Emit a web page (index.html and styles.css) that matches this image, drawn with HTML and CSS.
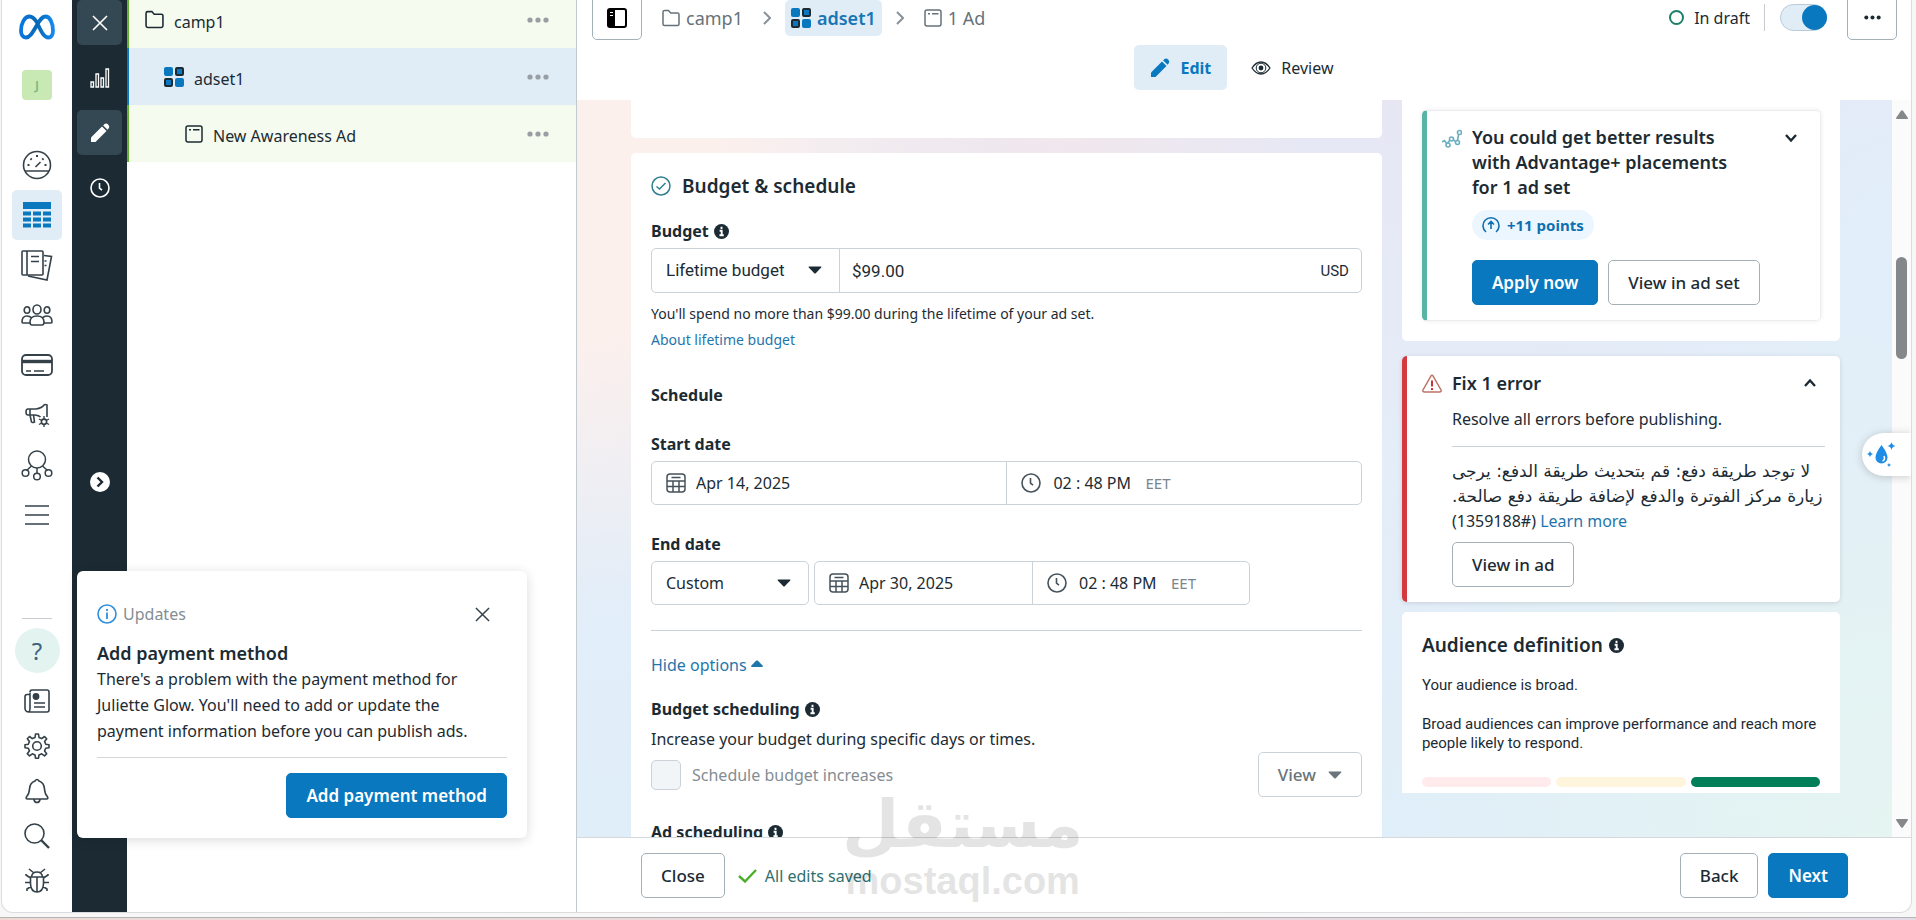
FILE: index.html
```html
<!DOCTYPE html>
<html lang="en">
<head>
    <meta charset="UTF-8">
    <meta name="viewport" content="width=device-width, initial-scale=1.0">
    <title>Ads Manager - adset1</title>
    <link rel="stylesheet" href="styles.css">
</head>
<body>

    <!-- Shared icons -->
    <svg class="sprite" aria-hidden="true">
        <symbol id="i-info" viewBox="0 0 16 16">
            <circle cx="8" cy="8" r="8" fill="#1c2b33"/>
            <path d="M8 3v2.400M6 7.200h2.200v4.600M5.800 12h4.600" fill="none" stroke="#fff" stroke-width="2"/>
        </symbol>
        <symbol id="i-folder" viewBox="0 0 18 18">
            <path d="M1 3q0-1.500 1.500-1.500h4l2.200 2.500h6.800q1.500 0 1.500 1.500v9.500q0 1.500-1.500 1.500h-13q-1.500 0-1.500-1.500z" fill="none" stroke="currentColor" stroke-width="1.500"/>
        </symbol>
        <symbol id="i-adset" viewBox="0 0 20 20">
            <rect x="0" y="0" width="9" height="9" rx="2" fill="#0a78be"/>
            <rect x="11" y="11" width="9" height="9" rx="2" fill="#0a78be"/>
            <rect x="12" y="1" width="7" height="7" rx="1" fill="#0a78be" stroke="#1c2b33" stroke-width="2"/>
            <rect x="1" y="12" width="7" height="7" rx="1" fill="#0a78be" stroke="#1c2b33" stroke-width="2"/>
        </symbol>
        <symbol id="i-ad" viewBox="0 0 18 18">
            <rect x="1" y="1" width="16" height="16" rx="2" fill="none" stroke="currentColor" stroke-width="1.500"/>
            <path d="M4 4.700h2M8 4.700h6.500" stroke="currentColor" stroke-width="1.500"/>
        </symbol>
        <symbol id="i-dots" viewBox="0 0 22 6">
            <circle cx="3" cy="3" r="2.600" fill="currentColor"/>
            <circle cx="11" cy="3" r="2.600" fill="currentColor"/>
            <circle cx="19" cy="3" r="2.600" fill="currentColor"/>
        </symbol>
        <symbol id="i-pencil" viewBox="0 0 20 20">
            <path d="M1 19v-4.500L12 3.500 16.500 8 5.500 19z" fill="currentColor"/>
            <path d="M13.200 2.400 14.500 1.100q1.800-1.500 3.600.300t.800 3.500L17.600 6.800z" fill="currentColor"/>
        </symbol>
        <symbol id="i-clock" viewBox="0 0 20 20">
            <circle cx="10" cy="10" r="9" fill="none" stroke="currentColor" stroke-width="1.600"/>
            <path d="M9.500 5v5.200l2.500 2" fill="none" stroke="currentColor" stroke-width="1.600"/>
        </symbol>
        <symbol id="i-calendar" viewBox="0 0 20 20">
            <rect x="1" y="1" width="18" height="18" rx="3" fill="none" stroke="currentColor" stroke-width="1.500"/>
            <path d="M1 8h18M1 13.500h18M7 8v11M13 8v11M5.500 4.500h9" stroke="currentColor" stroke-width="1.500"/>
        </symbol>
        <symbol id="i-cross" viewBox="0 0 16 16">
            <path d="M1 1l14 14M15 1L1 15" fill="none" stroke="currentColor" stroke-width="1.600"/>
        </symbol>
        <symbol id="i-chevron" viewBox="0 0 14 14">
            <path d="M2 4l5 5.500L12 4" fill="none" stroke="currentColor" stroke-width="2.400"/>
        </symbol>
        <symbol id="i-caret" viewBox="0 0 14 8">
            <path d="M1 .500h12q.800.300.200 1L8 7q-1 1-2 0L.800 1.500Q.200.800 1 .500z" fill="currentColor"/>
        </symbol>
    </svg>

    <div class="app">

        <!-- Global navigation -->
        <nav class="rail" aria-label="Tools">
            <a href="#" class="logo" aria-label="Meta">
                <svg width="36" height="26" viewBox="0 0 36 26" fill="none">
                    <defs>
                        <linearGradient id="metaBlue" x1="0" x2="1" y1="0" y2="0">
                            <stop offset="0" stop-color="#0a78e0"/>
                            <stop offset=".5" stop-color="#0668b4"/>
                            <stop offset="1" stop-color="#1489f0"/>
                        </linearGradient>
                    </defs>
                    <path d="M18 8.500C15.500 4.500 13.500 2.500 10.500 2.500 5.500 2.500 2 9.500 2 16.500 2 21 3.800 23.500 7 23.500c3.500 0 5.500-3 11-12.500 3-5.500 5-8.500 8.500-8.500C31 2.500 34 9.500 34 16.500c0 4.500-1.600 7-4.600 7-4 0-6.400-4-11.400-15z" stroke="url(#metaBlue)" stroke-width="3.800"/>
                </svg>
            </a>
            <a href="#" class="avatar">J</a>

            <div class="rail-main">
                <a href="#" aria-label="Account overview">
                    <svg width="30" height="30" viewBox="0 0 30 30" fill="none" stroke="currentColor" stroke-width="1.600">
                        <circle cx="15" cy="15" r="13.500"/>
                        <path d="M3 21h24M13.500 17l5-5"/>
                        <path d="M5.500 15h2M22.500 15h2M15 5v2M8.500 8.500l1.200 1.200M21.500 8.500l-1.200 1.200" stroke-width="2"/>
                    </svg>
                </a>
                <a href="#" class="active" aria-label="Campaigns">
                    <svg width="28" height="26" viewBox="0 0 28 26" fill="#0a78be">
                        <path d="M0 0h28v7H0zM0 9.500h8v4H0zM10 9.500h8v4h-8zM20 9.500h8v4h-8zM0 15.500h8v4H0zM10 15.500h8v4h-8zM20 15.500h8v4h-8zM0 21.500h8v4H0zM10 21.500h8v4h-8zM20 21.500h8v4h-8z"/>
                    </svg>
                </a>
                <a href="#" aria-label="Ads reporting">
                    <svg width="32" height="31" viewBox="0 0 32 31" fill="none" stroke="currentColor" stroke-width="1.600">
                        <path d="M23 5.500l7.500 1-4.500 23.500-19-4M23.500 11h2M23.500 15.500h2"/>
                        <rect x="1" y="1" width="21" height="24" rx="1" fill="#fff"/>
                        <path d="M6 1v24M10 6.500h8M10 11.500h8"/>
                    </svg>
                </a>
                <a href="#" aria-label="Audiences">
                    <svg width="32" height="22" viewBox="0 0 32 22" fill="none" stroke="currentColor" stroke-width="1.600">
                        <ellipse cx="16" cy="5.500" rx="4" ry="4.500"/>
                        <ellipse cx="6" cy="6" rx="2.800" ry="3.300"/>
                        <ellipse cx="26" cy="6" rx="2.800" ry="3.300"/>
                        <path d="M9 18q0-6 7-6t7 6q0 3-2 3H11q-2 0-2-3zM9 19H2q-1 0-1-1 0-6 5-6 3 0 4.500 2M23 19h7q1 0 1-1 0-6-5-6-3 0-4.500 2"/>
                    </svg>
                </a>
                <a href="#" aria-label="Billing and payments">
                    <svg width="32" height="22" viewBox="0 0 32 22" fill="none" stroke="currentColor" stroke-width="1.800">
                        <rect x="1" y="1" width="30" height="20" rx="4"/>
                        <path d="M1 7.500h30" stroke-width="3.400"/>
                        <path d="M5 17h5M13 17h10" stroke-width="1.500"/>
                    </svg>
                </a>
                <a href="#" aria-label="Ad settings">
                    <svg width="25" height="25" viewBox="0 0 25 25" fill="none" stroke="currentColor" stroke-width="1.600">
                        <path d="M3 6h8q6-1 8-4 1-1 3 0v12M5 6v6M3 6Q1 6 1 9t2 3h7q4 .500 5.500 2M5 12l1.500 7q1 1 3 0l-1-7"/>
                        <path d="M19 13v11M14 16l10 5.500M24 16l-10 5.500" stroke-width="1.400"/>
                        <circle cx="19" cy="18.700" r="2.600" fill="#fff"/>
                    </svg>
                </a>
                <a href="#" aria-label="Events manager">
                    <svg width="32" height="31" viewBox="0 0 32 31" fill="none" stroke="currentColor" stroke-width="1.500">
                        <circle cx="16" cy="9.500" r="8.500"/>
                        <path d="M16 18v5M10.500 16l-5 4.500M21.500 16l5 4.500"/>
                        <circle cx="4.500" cy="23" r="3.300"/>
                        <circle cx="16" cy="26.500" r="3.300"/>
                        <circle cx="27.500" cy="23" r="3.300"/>
                    </svg>
                </a>
                <a href="#" aria-label="All tools">
                    <svg width="24" height="22" viewBox="0 0 24 22" fill="none" stroke="currentColor" stroke-width="1.500">
                        <path d="M0 2h24M0 11h24M0 20h24"/>
                    </svg>
                </a>
            </div>

            <div class="rail-bottom">
                <a href="#" class="help">?</a>
                <a href="#" aria-label="News">
                    <svg width="26" height="24" viewBox="0 0 26 24" fill="none" stroke="currentColor" stroke-width="1.600">
                        <path d="M6 3.500Q6 1 8 1h15q2 0 2 2v18q0 2-2 2H5q-4 0-4-4V8q0-2.500 2-2.500h3M6 4v15q0 4-2 4M10 14h11M10 18h11"/>
                        <circle cx="12" cy="7.500" r="2.600" fill="currentColor"/>
                    </svg>
                </a>
                <a href="#" aria-label="Settings">
                    <svg width="26" height="26" viewBox="0 0 26 26" fill="none" stroke="currentColor" stroke-width="1.600">
                        <path d="M11 4.500 11.500 1h3L15 4.500l2.700 1.100L20.500 3.500l2.200 2.200-2.100 2.800 1.100 2.700 3.300.500v3l-3.300.500-1.100 2.700 2.100 2.800-2.200 2.200-2.800-2.100-2.700 1.100-.500 3.300h-3l-.500-3.300-2.700-1.100-2.800 2.100-2.200-2.200 2.100-2.800L4.300 15.200 1 14.700v-3l3.300-.500 1.100-2.700-2.100-2.800 2.200-2.200 2.800 2.100z" stroke-linejoin="round"/>
                        <circle cx="13" cy="13" r="4.300"/>
                    </svg>
                </a>
                <a href="#" aria-label="Notifications">
                    <svg width="24" height="26" viewBox="0 0 24 26" fill="none" stroke="currentColor" stroke-width="1.600">
                        <path d="M10 3q2-3 4 0 5 1.500 5.500 8 .300 5 2.800 7.500 1.500 2.500-1 2.500H2.700q-2.500 0-1-2.500Q4.200 16 4.500 11 5 4.500 10 3zM9 21.500q.500 3 3 3t3-3"/>
                    </svg>
                </a>
                <a href="#" aria-label="Search">
                    <svg width="26" height="26" viewBox="0 0 26 26" fill="none" stroke="currentColor" stroke-width="1.600">
                        <circle cx="10.500" cy="10.500" r="9.500"/>
                        <path d="M17 17l8 8" stroke-width="2.400"/>
                    </svg>
                </a>
                <a href="#" aria-label="Report a problem">
                    <svg width="24" height="25" viewBox="0 0 24 25" fill="none" stroke="currentColor" stroke-width="1.600">
                        <path d="M5.500 9h13v7q-.500 8-6.500 8t-6.500-8zM6.500 9Q7 4 12 4t5.500 5M12 9v15M4 1l5 4M20 1l-5 4M5.500 10 1 7v-1M18.500 10 23 7v-1M0 14.500h5.500M24 14.500h-5.500M6 18.500 2 21v2M18 18.500l4 2.500v2"/>
                    </svg>
                </a>
            </div>
        </nav>

        <!-- Editor tools -->
        <div class="tools">
            <button class="on" aria-label="Close editor"><svg width="16" height="16"><use href="#i-cross"/></svg></button>
            <button aria-label="Charts">
                <svg width="20" height="20" viewBox="0 0 20 20" fill="none" stroke="currentColor" stroke-width="1.300">
                    <path d="M1 14h2.500v5H1zM6 6h2.500v13H6zM11 10h2.500v9H11zM16 1h2.500v18H16z"/>
                </svg>
            </button>
            <button class="on" aria-label="Edit"><svg width="20" height="20"><use href="#i-pencil"/></svg></button>
            <button aria-label="History"><svg width="20" height="20"><use href="#i-clock"/></svg></button>
            <button class="expand" aria-label="Expand">
                <svg width="8" height="12" viewBox="0 0 8 12" fill="none" stroke="#1c2b33" stroke-width="2.400"><path d="M1.500 1.500 6 6l-4.500 4.500"/></svg>
            </button>
        </div>

        <!-- Campaign tree -->
        <aside class="tree">
            <ul>
                <li class="level-1">
                    <svg width="19" height="19"><use href="#i-folder"/></svg>
                    <a href="#">camp1</a>
                    <button aria-label="More options"><svg width="22" height="6"><use href="#i-dots"/></svg></button>
                </li>
                <li class="level-2 selected">
                    <svg width="20" height="20"><use href="#i-adset"/></svg>
                    <a href="#">adset1</a>
                    <button aria-label="More options"><svg width="22" height="6"><use href="#i-dots"/></svg></button>
                </li>
                <li class="level-3">
                    <svg width="18" height="18"><use href="#i-ad"/></svg>
                    <a href="#">New Awareness Ad</a>
                    <button aria-label="More options"><svg width="22" height="6"><use href="#i-dots"/></svg></button>
                </li>
            </ul>
        </aside>

        <main class="editor">
            <header class="topbar">
                <div class="crumb-row">
                    <button class="btn icon-btn" aria-label="Toggle side panel">
                        <svg width="20" height="20" viewBox="0 0 20 20">
                            <rect x="1" y="1" width="18" height="18" rx="2" fill="none" stroke="#000" stroke-width="2"/>
                            <path d="M1 1h7v18H1z"/>
                            <path d="M3 4.500h3M3 7.500h3" stroke="#fff" stroke-width="1.200"/>
                        </svg>
                    </button>
                    <nav class="crumbs" aria-label="Breadcrumb">
                        <a href="#"><svg width="18" height="18"><use href="#i-folder"/></svg>camp1</a>
                        <svg class="sep" width="8" height="14" viewBox="0 0 8 14"><path d="M1 1l6 6-6 6" fill="none" stroke="#8a9299" stroke-width="2"/></svg>
                        <a href="#" class="current"><svg width="20" height="20"><use href="#i-adset"/></svg>adset1</a>
                        <svg class="sep" width="8" height="14" viewBox="0 0 8 14"><path d="M1 1l6 6-6 6" fill="none" stroke="#8a9299" stroke-width="2"/></svg>
                        <a href="#"><svg width="18" height="18"><use href="#i-ad"/></svg>1 Ad</a>
                    </nav>
                    <div class="status">
                        <span class="ring"></span>
                        <span class="draft">In draft</span>
                        <input type="checkbox" class="switch" aria-label="Ad set on or off" checked>
                        <button class="btn icon-btn" aria-label="More">
                            <svg width="17" height="5"><use href="#i-dots"/></svg>
                        </button>
                    </div>
                </div>
                <div class="tabs">
                    <button class="tab active"><svg width="20" height="20"><use href="#i-pencil"/></svg>Edit</button>
                    <button class="tab">
                        <svg width="20" height="14" viewBox="0 0 20 14" fill="none" stroke="#1c2b33">
                            <path d="M1 7q4-6 9-6t9 6q-4 6-9 6T1 7z" stroke-width="1.300"/>
                            <circle cx="10" cy="7" r="4.800" stroke-width="1"/>
                            <circle cx="10" cy="7" r="2.400" fill="#1c2b33" stroke="none"/>
                        </svg>Review
                    </button>
                </div>
            </header>

            <div class="scroll">
                <div class="columns">
                    <div class="form-col">
                        <section class="card previous"></section>

                        <section class="card budget">
                            <h2>
                                <svg width="20" height="20" viewBox="0 0 20 20" fill="none" stroke="#2f7f91" stroke-width="1.500"><circle cx="10" cy="10" r="9"/><path d="M5.500 10.500l3 2.500L14.500 7"/></svg>
                                Budget &amp; schedule
                            </h2>

                            <label class="label" for="amount">Budget <svg width="15" height="15"><use href="#i-info"/></svg></label>
                            <div class="field roboto">
                                <div class="select budget-type">
                                    <select aria-label="Budget type"><option>Lifetime budget</option></select>
                                    <svg width="14" height="8"><use href="#i-caret"/></svg>
                                </div>
                                <div class="part grow">
                                    <input type="text" id="amount" value="$99.00">
                                    <span class="usd">USD</span>
                                </div>
                            </div>
                            <p class="hint">You'll spend no more than $99.00 during the lifetime of your ad set.</p>
                            <p class="hint"><a href="#">About lifetime budget</a></p>

                            <h3>Schedule</h3>

                            <label class="label" for="start">Start date</label>
                            <div class="field halves">
                                <div class="part">
                                    <svg width="20" height="20"><use href="#i-calendar"/></svg>
                                    <input type="text" id="start" value="Apr 14, 2025">
                                </div>
                                <div class="part">
                                    <svg width="20" height="20"><use href="#i-clock"/></svg>
                                    <input type="text" class="time" aria-label="Start time" value="02 : 48 PM">
                                    <span class="zone">EET</span>
                                </div>
                            </div>

                            <label class="label end" for="end">End date</label>
                            <div class="end-row">
                                <div class="field select">
                                    <select aria-label="End date type"><option>Custom</option></select>
                                    <svg width="14" height="8"><use href="#i-caret"/></svg>
                                </div>
                                <div class="field halves">
                                    <div class="part">
                                        <svg width="20" height="20"><use href="#i-calendar"/></svg>
                                        <input type="text" id="end" value="Apr 30, 2025">
                                    </div>
                                    <div class="part">
                                        <svg width="20" height="20"><use href="#i-clock"/></svg>
                                        <input type="text" class="time" aria-label="End time" value="02 : 48 PM">
                                        <span class="zone">EET</span>
                                    </div>
                                </div>
                            </div>

                            <hr>

                            <a href="#" class="hide-options">Hide options <svg width="12" height="7" viewBox="0 0 12 7"><path d="M0 6 5 .800q1-.800 2 0L12 6q0 1-1 1H1Q0 7 0 6z" fill="currentColor"/></svg></a>

                            <h3 class="option">Budget scheduling <svg width="15" height="15"><use href="#i-info"/></svg></h3>
                            <p>Increase your budget during specific days or times.</p>
                            <div class="option-row">
                                <input type="checkbox" id="increases" disabled>
                                <label for="increases">Schedule budget increases</label>
                                <button class="btn view">View <svg width="14" height="8"><use href="#i-caret"/></svg></button>
                            </div>

                            <h3 class="option next-option">Ad scheduling <svg width="15" height="15"><use href="#i-info"/></svg></h3>
                        </section>
                    </div>

                    <div class="side-col">
                        <section class="card tips">
                            <div class="tip">
                                <svg width="20" height="20" viewBox="0 0 20 20" fill="none" stroke="#6aaebf" stroke-width="1.600">
                                    <path d="M0 13l2.500-1.500 2.500 3.500L9.500 9l5.500 5 1.500-8"/>
                                    <circle cx="6" cy="16" r="2" fill="#fff"/><circle cx="9.500" cy="10" r="2" fill="#fff"/>
                                    <circle cx="15.500" cy="13.500" r="2" fill="#fff"/><circle cx="17.500" cy="3.500" r="2" fill="#fff"/>
                                </svg>
                                <div class="tip-body">
                                    <h3>You could get better results with Advantage+ placements for 1 ad set</h3>
                                    <span class="points">
                                        <svg width="18" height="18" viewBox="0 0 18 18" fill="none" stroke="currentColor" stroke-width="1.600"><path d="M4 16a8 8 0 1 1 10 0M9 13V6M6 8.500 9 5.500l3 3"/></svg>
                                        +11 points
                                    </span>
                                    <div class="actions">
                                        <button class="btn primary">Apply now</button>
                                        <button class="btn">View in ad set</button>
                                    </div>
                                </div>
                                <button class="fold" aria-label="Expand"><svg width="14" height="14"><use href="#i-chevron"/></svg></button>
                            </div>
                        </section>

                        <section class="card error">
                            <svg width="20" height="19" viewBox="0 0 20 19" fill="none" stroke="#bd7468">
                                <path d="M9 2q1-1.600 2 0l8 14q.500 2-1.500 2h-15Q.500 18 1 16z" stroke-width="1.500"/>
                                <path d="M10 6.500v6M10 14v2" stroke="#c8323a" stroke-width="2"/>
                            </svg>
                            <div class="error-body">
                                <h3>Fix 1 error</h3>
                                <p>Resolve all errors before publishing.</p>
                                <p class="detail"><span class="arabic" dir="rtl" lang="ar">لا توجد طريقة دفع: قم بتحديث طريقة الدفع: يرجى<br>زيارة مركز الفوترة والدفع لإضافة طريقة دفع صالحة.<br></span><span dir="rtl">&#x61C;(#1359188)</span> <a href="#">Learn more</a></p>
                                <button class="btn">View in ad</button>
                            </div>
                            <button class="fold up" aria-label="Collapse"><svg width="14" height="14"><use href="#i-chevron"/></svg></button>
                        </section>

                        <section class="card audience">
                            <h2>Audience definition <svg width="15" height="15"><use href="#i-info"/></svg></h2>
                            <p>Your audience is broad.</p>
                            <p>Broad audiences can improve performance and reach more people likely to respond.</p>
                            <div class="meter"><span class="low"></span><span class="mid"></span><span class="high"></span></div>
                        </section>
                    </div>
                </div>

                <div class="scrollbar">
                    <svg width="12" height="9" viewBox="0 0 12 9"><path d="M5 .800q1-1 2 0L12 8q0 1-1 1H1Q0 9 0 8z" fill="#85888b"/></svg>
                    <div class="thumb"></div>
                    <svg width="12" height="9" viewBox="0 0 12 9"><path d="M5 8.200q1 1 2 0L12 1q0-1-1-1H1Q0 0 0 1z" fill="#85888b"/></svg>
                </div>
            </div>

            <footer class="bottombar">
                <button class="btn">Close</button>
                <span class="saved">
                    <svg width="19" height="14" viewBox="0 0 19 14" fill="none" stroke="#4caf2a" stroke-width="2.400"><path d="M1 7l6 5.500L18 1"/></svg>
                    All edits saved
                </span>
                <button class="btn back">Back</button>
                <button class="btn primary">Next</button>
            </footer>
        </main>

        <!-- Payment notice -->
        <div class="notice" role="dialog" aria-labelledby="notice-title">
            <div class="notice-head">
                <svg width="20" height="20" viewBox="0 0 20 20" fill="none" stroke="#2f8fdc" stroke-width="1.600"><circle cx="10" cy="10" r="9"/><path d="M10 8.500V15M10 5v2" stroke-width="1.800"/></svg>
                <span>Updates</span>
                <button aria-label="Dismiss"><svg width="15" height="15"><use href="#i-cross"/></svg></button>
            </div>
            <h3 id="notice-title">Add payment method</h3>
            <p>There's a problem with the payment method for Juliette Glow. You'll need to add or update the payment information before you can publish ads.</p>
            <div class="notice-foot"><button class="btn primary">Add payment method</button></div>
        </div>

        <button class="assistant" aria-label="Assistant">
            <svg width="30" height="28" viewBox="0 0 30 28" fill="#1f8ce6">
                <path d="M14.500 4q6 8 6 12.500a6 6 0 0 1-12 0Q8.500 12 14.500 4z"/>
                <path d="M17 15q1.500 4-1.500 5" stroke="#fff" stroke-width="1.500" fill="none"/>
                <path d="M24.500 1q.600 3 4 4-3.400.700-4 4-.600-3.300-4-4 3.400-1 4-4zM3 10q.500 2.300 3 3-2.500.700-3 3-.500-2.300-3-3 2.500-.700 3-3zM22 22q.300 1.700 2 2-1.700.300-2 2-.300-1.700-2-2 1.700-.300 2-2z"/>
            </svg>
        </button>

        <div class="watermark">
            <span class="wm-ar" lang="ar" dir="rtl">مستقل</span>
            <span class="wm-en">mostaql.com</span>
        </div>
    </div>

</body>
</html>
```
FILE: styles.css
```css
/* General Styles */
* {
    box-sizing: border-box;
}

html, body {
    margin: 0;
    padding: 0;
}

body {
    height: 100vh;
    display: flex;
    padding: 0 4px 7px 1px;
    background: linear-gradient(to right, #eed9d4, #e3dbe6) bottom / 100% 2px no-repeat, linear-gradient(#b4b4b6, #b4b4b6) bottom / 100% 3px no-repeat, #f7f7f7;
    color: #1c2b33;
    font-family: "Noto Sans", "DejaVu Sans", sans-serif;
    font-size: 16px;
    line-height: 26px;
    overflow: hidden;
}

h2, h3, p, ul {
    margin: 0;
    padding: 0;
}

h2 {
    font-size: 19px;
    font-weight: 600;
}

h3 {
    font-size: 16px;
    font-weight: 700;
}

a {
    color: #1f76ab;
    text-decoration: none;
}

button, input, select {
    font: inherit;
    color: inherit;
    margin: 0;
    padding: 0;
    border: none;
    background: none;
}

button {
    cursor: pointer;
}

svg {
    flex: none;
}

.sprite {
    position: absolute;
    width: 0;
    height: 0;
}

.app {
    position: relative;
    flex: 1;
    display: flex;
    background: #fff;
    border: 1px solid #dcdcde;
    border-top: none;
    border-radius: 0 0 12px 12px;
    overflow: hidden;
}

/* Buttons */
.btn {
    height: 45px;
    padding: 0 19px;
    border: 1px solid #a4b0b8;
    border-radius: 5px;
    background: #fff;
    font-size: 17px;
    font-weight: 500;
    white-space: nowrap;
}

.btn.primary {
    background: #0a78be;
    border-color: #0a78be;
    color: #fff;
    font-weight: 600;
}

.icon-btn {
    width: 50px;
    padding: 0;
    display: flex;
    align-items: center;
    justify-content: center;
}

/* Global navigation */
.rail {
    width: 70px;
    display: flex;
    flex-direction: column;
    align-items: center;
    padding-bottom: 9px;
}

.rail a {
    display: flex;
    align-items: center;
    justify-content: center;
    color: #344149;
}

.rail .logo {
    height: 54px;
}

.rail .avatar {
    width: 30px;
    height: 30px;
    margin: 16px 0 40px;
    border-radius: 4px;
    background: #c8e9b4;
    color: #7dbb7c;
    font-size: 13px;
    font-weight: 600;
}

.rail-main a {
    width: 50px;
    height: 50px;
    border-radius: 5px;
}

.rail-main .active {
    background: #e0edf7;
}

.rail-bottom {
    margin-top: auto;
    padding-top: 10px;
    background: linear-gradient(#c8ccd0, #c8ccd0) top / 30px 1px no-repeat;
}

.rail-bottom a {
    width: 45px;
    height: 45px;
}

.rail-bottom .help {
    margin-bottom: 5px;
    border-radius: 50%;
    background: #e3f4f0;
    color: #3c6480;
    font-size: 24px;
}

/* Editor tools */
.tools {
    width: 55px;
    display: flex;
    flex-direction: column;
    align-items: center;
    gap: 10px;
    background: #1c2b33;
}

.tools button {
    width: 45px;
    height: 45px;
    display: flex;
    align-items: center;
    justify-content: center;
    border-radius: 5px;
    color: #fff;
}

.tools .on {
    background: #344854;
}

.tools .expand {
    width: 20px;
    height: 20px;
    margin-top: 252px;
    border-radius: 50%;
    background: #fff;
}

/* Campaign tree */
.tree {
    width: 450px;
    border-right: 1px solid #c3cacf;
}

.tree ul {
    list-style: none;
    margin-top: -9px;
}

.tree li {
    height: 57px;
    display: flex;
    align-items: center;
    gap: 10px;
    padding-right: 27px;
    border-left: 2px solid #62b22f;
    background: #f5fbee;
}

.tree a {
    flex: 1;
    color: inherit;
    padding-top: 4px;
}

.tree button {
    display: flex;
    color: #989ea3;
}

.tree .level-1 {
    padding-left: 16px;
}

.tree .level-2 {
    padding-left: 35px;
}

.tree .level-3 {
    padding-left: 56px;
}

.tree .selected {
    background: #e0edf7;
    border-left-color: #0a78be;
}

/* Top bar */
.editor {
    flex: 1;
    min-width: 0;
    display: flex;
    flex-direction: column;
}

.topbar {
    height: 100px;
    padding: 0 14px 0 15px;
}

.crumb-row {
    display: flex;
    align-items: center;
    margin-top: -5px;
}

.crumbs {
    flex: 1;
    display: flex;
    align-items: center;
    gap: 14px;
    margin-left: 14px;
    font-size: 18px;
}

.crumbs a {
    height: 36px;
    display: flex;
    align-items: center;
    gap: 6px;
    padding: 0 6px;
    border-radius: 5px;
    color: #66727a;
}

.crumbs .current {
    background: #e0edf7;
    color: #1876b5;
    font-weight: 600;
}

.status {
    display: flex;
    align-items: center;
}

.ring {
    width: 15px;
    height: 15px;
    border: 2px solid #1c7f68;
    border-radius: 50%;
}

.draft {
    margin: 0 14px 0 10px;
}

.switch {
    appearance: none;
    position: relative;
    width: 47px;
    height: 27px;
    margin: 0 20px 0 16px;
    border: 1px solid #b9cbd8;
    border-radius: 14px;
    background: #e0edf7;
}

.switch::before {
    content: "";
    position: absolute;
    left: -17px;
    top: -1px;
    height: 27px;
    border-left: 1px solid #c8ccd0;
}

.switch::after {
    content: "";
    position: absolute;
    right: -1px;
    top: 0;
    width: 25px;
    height: 25px;
    border-radius: 50%;
    background: #0a78be;
}

.tabs {
    display: flex;
    justify-content: center;
    gap: 8px;
    margin: 5px 5px 0 0;
}

.tab {
    height: 45px;
    display: flex;
    align-items: center;
    gap: 10px;
    padding: 0 16px;
    border-radius: 5px;
}

.tab.active {
    background: #e0edf7;
    color: #0a78be;
    font-weight: 700;
}

/* Scrolling form */
.scroll {
    flex: 1;
    min-height: 0;
    display: flex;
    overflow: hidden;
    background:
        radial-gradient(circle at 100% 100%, #e5f5f1 0, rgba(229, 245, 241, 0) 36%),
        radial-gradient(circle at 0 12%, #fcf0ed 0, #fcf0ed 10%, rgba(252, 240, 237, 0) 28%),
        radial-gradient(circle at 36% 0, #f3e7ec 0, rgba(243, 231, 236, 0) 22%),
        radial-gradient(circle at 100% 20%, #e1eefa 0, rgba(225, 238, 250, 0) 30%),
        linear-gradient(#e7e7f4, #e4edf8 50%, #dfeef9);
}

.columns {
    flex: 1;
    display: grid;
    grid-template-columns: 12fr 7fr;
    gap: 20px;
    align-items: start;
    padding: 0 52px 0 54px;
}

.card {
    background: #fff;
    border-radius: 5px;
}

.previous {
    height: 38px;
    margin-bottom: 15px;
    border-radius: 0 0 5px 5px;
}

.budget {
    padding: 20px;
}

.budget h2 {
    display: flex;
    align-items: center;
    gap: 11px;
    margin-bottom: 19px;
}

.label {
    display: flex;
    align-items: center;
    gap: 5px;
    margin-bottom: 4px;
    font-weight: 700;
}

.field {
    height: 45px;
    display: flex;
    border: 1px solid #cbd2d9;
    border-radius: 5px;
}

.roboto {
    font-family: Roboto, sans-serif;
    font-size: 17px;
}

.part {
    display: flex;
    align-items: center;
    gap: 10px;
    padding: 0 12px 0 14px;
}

.part + .part {
    border-left: 1px solid #cbd2d9;
    gap: 12px;
}

.part input {
    flex: 1;
    min-width: 0;
    width: 100%;
}

.part .time {
    flex: none;
    width: 80px;
}

.part svg {
    color: #46525a;
}

.grow {
    flex: 1;
    border-left: 1px solid #cbd2d9;
    padding-left: 12px;
}

.halves {
    display: grid;
    grid-template-columns: 1fr 1fr;
}

.halves, .end-row .field {
    height: 44px;
}

.usd {
    font-size: 15px;
}

.zone {
    color: #7b858c;
    font-size: 15px;
}

.select {
    position: relative;
    width: 158px;
    align-items: center;
}

.select select {
    appearance: none;
    width: 100%;
    height: 42px;
    padding-left: 14px;
}

.select svg {
    position: absolute;
    right: 17px;
    top: 17px;
    pointer-events: none;
}

.budget-type {
    width: 187px;
}

.hint {
    font-size: 14px;
    line-height: 26px;
}

.field + .hint {
    margin-top: 8px;
}

.budget .hint + h3 {
    margin: 29px 0 23px;
}

.label.end {
    margin-top: 26px;
}

.end-row {
    display: flex;
    gap: 5px;
}

.end-row .halves {
    width: 436px;
}

hr {
    margin: 25px 0 21px;
    border: none;
    border-top: 1px solid #cbd2d9;
}

.hide-options svg {
    margin-bottom: 4px;
}

.option {
    display: flex;
    align-items: center;
    gap: 5px;
    margin-top: 18px;
    margin-bottom: 4px;
}

.option-row {
    display: flex;
    align-items: center;
    height: 45px;
}

.option-row input {
    appearance: none;
    width: 30px;
    height: 30px;
    margin-right: 11px;
    border: 1px solid #cbd2d9;
    border-radius: 5px;
    background: #f1f5f8;
}

.option-row label {
    color: #848d93;
}

.view {
    margin-left: auto;
    display: flex;
    align-items: center;
    gap: 12px;
    border-color: #cbd2d9;
    color: #6b757c;
}

.next-option {
    margin-top: 22px;
}

/* Side column */
.side-col h3 {
    line-height: 25px;
    font-size: 18px;
    font-weight: 600;
}

.tips {
    padding: 10px 19px 20px 20px;
    border-radius: 0 0 5px 5px;
    margin-bottom: 15px;
}

.tip {
    display: flex;
    gap: 10px;
    padding: 14px 22px 15px 15px;
    border: 1px solid #ebedf0;
    border-left: 5px solid #58b5a5;
    border-radius: 5px;
    box-shadow: 0 0 5px rgba(0, 0, 0, 0.08);
}

.tip > svg {
    margin-top: 4px;
}

.tip-body {
    flex: 1;
}

.tip h3 {
    max-width: 270px;
}

.fold {
    align-self: flex-start;
    height: 25px;
    display: flex;
    align-items: center;
}

.up {
    transform: scaleY(-1);
}

.points {
    width: fit-content;
    height: 30px;
    margin-top: 10px;
    display: flex;
    align-items: center;
    gap: 7px;
    padding: 0 10px;
    border-radius: 15px;
    background: #ecf6ff;
    color: #0f70b0;
    font-size: 15px;
    font-weight: 700;
}

.actions {
    display: flex;
    gap: 10px;
    margin-top: 20px;
}

.error {
    display: flex;
    gap: 10px;
    padding: 15px;
    border-left: 5px solid #d3393f;
    box-shadow: 0 1px 5px rgba(0, 0, 0, 0.12);
    margin-bottom: 10px;
}

.error > svg {
    margin-top: 3px;
}

.error-body {
    flex: 1;
}

.error-body p {
    margin-top: 10px;
}

.error .error-body .detail {
    margin: 14px 0 8px;
    padding-top: 12px;
    border-top: 1px solid #cbd2d9;
    line-height: 25px;
    white-space: nowrap;
}

.arabic {
    font-family: "DejaVu Sans", sans-serif;
    font-size: 17px;
}

.error .fold {
    margin: 0 8px 0 -32px;
}

.audience {
    padding: 20px 20px 6px;
    border-radius: 5px 5px 0 0;
    font-family: Roboto, sans-serif;
    font-size: 15px;
    line-height: 19px;
}

.audience h2 {
    display: flex;
    align-items: center;
    gap: 6px;
    font-family: "Noto Sans", sans-serif;
    line-height: 26px;
    margin-bottom: 18px;
}

.audience p {
    margin-bottom: 20px;
}

.meter {
    display: grid;
    grid-template-columns: 1fr 1fr 1fr;
    gap: 5px;
    margin-top: 24px;
}

.meter span {
    height: 10px;
    border-radius: 5px;
}

.low {
    background: #ffebeb;
}

.mid {
    background: #fff5dc;
}

.high {
    background: #027f58;
}

.scrollbar {
    width: 19px;
    display: flex;
    flex-direction: column;
    align-items: center;
    padding: 10px 0 9px;
    background: #fbfbfb;
}

.thumb {
    width: 11px;
    height: 102px;
    margin: 138px 0 auto;
    border-radius: 6px;
    background: #85888b;
}

/* Bottom bar */
.bottombar {
    display: flex;
    align-items: center;
    gap: 10px;
    padding: 15px 63px 14px 64px;
    border-top: 1px solid #d5d8db;
}

.saved {
    display: flex;
    align-items: center;
    gap: 8px;
    padding-left: 3px;
    color: #2e6f6f;
}

.back {
    margin-left: auto;
}

/* Payment notice */
.notice {
    position: absolute;
    left: 75px;
    bottom: 74px;
    width: 450px;
    padding: 30px 20px 20px;
    border-radius: 6px;
    background: #fff;
    box-shadow: 0 2px 12px rgba(0, 0, 0, 0.15);
}

.notice-head {
    display: flex;
    align-items: center;
    gap: 6px;
    margin-bottom: 13px;
    color: #848d93;
}

.notice-head button {
    margin: 0 17px 0 auto;
    display: flex;
    color: #344149;
}

.notice h3 {
    font-size: 18px;
    font-weight: 600;
}

.notice-foot {
    display: flex;
    justify-content: flex-end;
    margin-top: 13px;
    padding-top: 15px;
    border-top: 1px solid #d5d8db;
}

.assistant {
    position: absolute;
    right: 0;
    top: 433px;
    width: 49px;
    height: 43px;
    border-radius: 22px 0 0 22px;
    background: #fff;
    box-shadow: 0 1px 8px rgba(0, 0, 0, 0.2);
}

.assistant svg {
    display: block;
    margin-left: 5px;
}

/* Watermark */
.watermark {
    position: absolute;
    left: 840px;
    bottom: 8px;
    display: flex;
    flex-direction: column;
    align-items: center;
    color: #000;
    opacity: 0.1;
    pointer-events: none;
}

.wm-ar {
    font: bold 66px/66px "DejaVu Sans", sans-serif;
}

.wm-en {
    font: bold 38px/46px "Liberation Sans", sans-serif;
}
```
